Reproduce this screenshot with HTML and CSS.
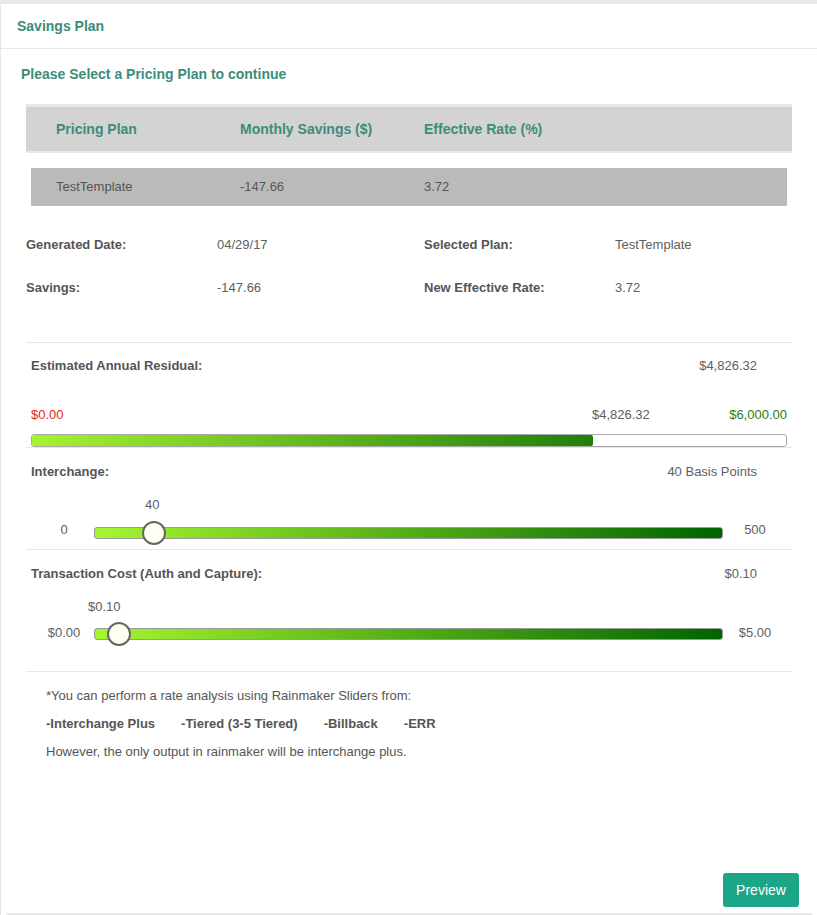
FILE: index.html
```html
<!DOCTYPE html>
<html>
<head>
<meta charset="utf-8">
<link rel="stylesheet" href="styles.css">
</head>
<body>
<div class="panel">
  <div class="panel-heading">Savings Plan</div>
  <div class="panel-body">
    <h3 class="prompt">Please Select a Pricing Plan to continue</h3>

    <div class="plan-table">
      <div class="plan-head">
        <span>Pricing Plan</span>
        <span>Monthly Savings ($)</span>
        <span>Effective Rate (%)</span>
      </div>
      <div class="plan-row">
        <span>TestTemplate</span>
        <span>-147.66</span>
        <span>3.72</span>
      </div>
    </div>

    <div class="details">
      <span class="label">Generated Date:</span>
      <span class="value">04/29/17</span>
      <span class="label">Selected Plan:</span>
      <span class="value">TestTemplate</span>
      <span class="label">Savings:</span>
      <span class="value">-147.66</span>
      <span class="label">New Effective Rate:</span>
      <span class="value">3.72</span>
    </div>

    <div class="section residual">
      <div class="title-row">
        <span class="label">Estimated Annual Residual:</span>
        <span class="value">$4,826.32</span>
      </div>
      <div class="scale-row">
        <span class="min" style="width:561px">$0.00</span>
        <span class="mid">$4,826.32</span>
        <span class="max">$6,000.00</span>
      </div>
      <div class="progress"><div class="progress-fill" style="width:74.4%"></div></div>
    </div>

    <div class="section slider-section">
      <div class="title-row">
        <span class="label">Interchange:</span>
        <span class="value">40 Basis Points</span>
      </div>
      <div class="current"><span style="margin-left:114px">40</span></div>
      <div class="slider-row">
        <span class="end">0</span>
        <div class="track"><span class="thumb" style="left:47px"></span></div>
        <span class="end end-right">500</span>
      </div>
    </div>

    <div class="section slider-section last">
      <div class="title-row">
        <span class="label">Transaction Cost (Auth and Capture):</span>
        <span class="value">$0.10</span>
      </div>
      <div class="current"><span style="margin-left:57px">$0.10</span></div>
      <div class="slider-row">
        <span class="end">$0.00</span>
        <div class="track"><span class="thumb" style="left:12px"></span></div>
        <span class="end end-right">$5.00</span>
      </div>
    </div>

    <div class="note">
      <p>*You can perform a rate analysis using Rainmaker Sliders from:</p>
      <p class="types"><b>-Interchange Plus</b><b>-Tiered (3-5 Tiered)</b><b>-Billback</b><b>-ERR</b></p>
      <p>However, the only output in rainmaker will be interchange plus.</p>
    </div>

    <div class="actions">
      <button class="btn-preview">Preview</button>
    </div>
  </div>
  <div class="foot-line"></div>
</div>
</body>
</html>
```

FILE: styles.css
```css
* { box-sizing: border-box; }

body {
  margin: 0;
  background: #ffffff;
  font-family: "Liberation Sans", Arial, sans-serif;
  font-size: 13px;
  color: #555555;
}

.panel {
  border-top: 4px solid #e7eaec;
  border-left: 1px solid #e7e7e7;
  min-height: 915px;
}

.panel-heading {
  height: 45px;
  line-height: 44px;
  padding-left: 16px;
  font-size: 14px;
  font-weight: bold;
  color: #3c8c7b;
  border-bottom: 1px solid #e7eaec;
}

.panel-body {
  padding: 0 25px;
}

.prompt {
  margin: 16px 0 0 -5px;
  font-size: 14px;
  line-height: 18px;
  font-weight: bold;
  color: #3c8c7b;
}

.plan-table {
  margin-top: 21px;
}

.plan-head {
  display: grid;
  grid-template-columns: 184px 184px 1fr;
  height: 49px;
  padding-left: 30px;
  border-top: 3px solid #e5e8eb;
  border-bottom: 2px solid #e6e9ec;
  background: #d3d3d3;
  line-height: 44px;
  font-size: 14px;
  font-weight: bold;
  color: #3c8c7b;
}

.plan-row {
  display: grid;
  grid-template-columns: 184px 184px 1fr;
  margin: 15px 5px 0;
  height: 38px;
  line-height: 38px;
  padding-left: 25px;
  background: #bababa;
  color: #555555;
}

.details {
  display: grid;
  grid-template-columns: 191px 207px 191px 1fr;
  margin-top: 17px;
  line-height: 43px;
}

.label {
  font-weight: bold;
  color: #555555;
}

.value {
  color: #606060;
}

.section {
  border-top: 1px solid #e7e7e7;
  padding: 0 5px;
}

.residual {
  margin-top: 33px;
}

.title-row {
  display: flex;
  justify-content: space-between;
  line-height: 20px;
  padding-right: 30px;
  margin-top: 13px;
}

.scale-row {
  display: flex;
  line-height: 20px;
  margin-top: 29px;
}

.scale-row .min {
  flex: none;
  color: #ee1c25;
}

.scale-row .mid {
  color: #606060;
}

.scale-row .max {
  margin-left: auto;
  color: #2a7d12;
}

.progress {
  margin-top: 9px;
  height: 13px;
  border: 1px solid #a9a9a9;
  border-radius: 3px;
  background: #ffffff;
  overflow: hidden;
}

.progress-fill {
  height: 100%;
  background: linear-gradient(to right, #a6f330, #1f7f08);
  border-radius: 2px;
}

.slider-section .title-row {
  margin-top: 14px;
}

.current {
  margin-top: 13px;
  line-height: 20px;
  color: #606060;
}

.slider-row {
  display: flex;
  align-items: flex-start;
  height: 24px;
  margin-top: 6px;
  margin-bottom: 4px;
}

.slider-section.last .slider-row {
  margin-top: 5px;
  margin-bottom: 25px;
}

.end {
  flex: none;
  width: 60px;
  margin-left: 3px;
  text-align: center;
  line-height: 20px;
  margin-top: -1px;
  color: #606060;
}

.slider-section.last .end {
  margin-top: 1px;
}

.end-right {
  width: 64px;
  margin-left: 0;
}

.track {
  position: relative;
  flex: 1;
  height: 12px;
  margin-top: 6px;
  border: 1px solid #9a9a9a;
  border-radius: 3px;
  background: linear-gradient(to right, #a6f62f, #006400);
}

.thumb {
  position: absolute;
  top: -7px;
  width: 24px;
  height: 24px;
  border: 2px solid #666666;
  border-radius: 50%;
  background: #fffff2;
}

.note {
  border-top: 1px solid #e7e7e7;
  padding: 10px 0 0 20px;
  color: #555555;
}

.note p {
  margin: 0;
  line-height: 28px;
}

.types {
  display: flex;
  gap: 26px;
}

.types b {
  font-weight: bold;
}

.actions {
  display: flex;
  justify-content: flex-end;
  margin-top: 107px;
  margin-right: -7px;
}

.btn-preview {
  width: 76px;
  height: 34px;
  border: none;
  border-radius: 3px;
  background: #1ba689;
  color: #ffffff;
  font-family: "Liberation Sans", Arial, sans-serif;
  font-size: 14px;
  padding: 0;
}

.foot-line {
  margin: 6px 5px 0 5px;
  border-top: 2px solid #e9e9e9;
}
```
